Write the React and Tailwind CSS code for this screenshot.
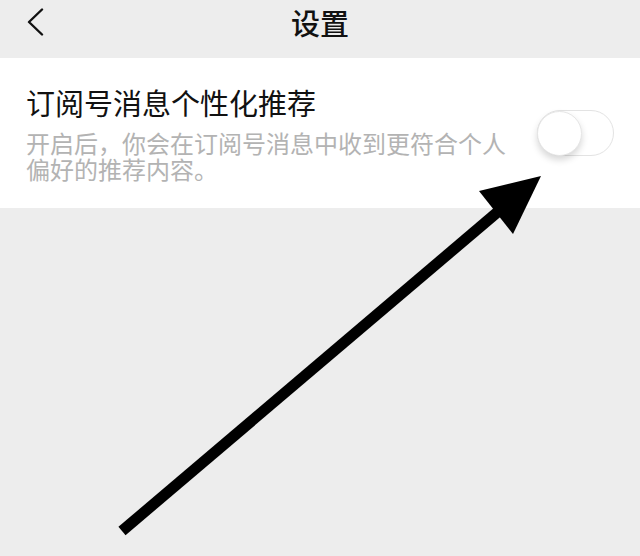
import React from "react";

const font = { fontFamily: '"Noto Sans CJK SC", "Noto Sans", sans-serif' };

export default function App() {
  return (
    <div
      className="relative w-[640px] h-[556px] bg-[#ededed] overflow-hidden"
      style={font}
    >
      <header className="grid grid-cols-[1fr_auto_1fr] items-center h-[58px] pb-[14px] px-[26px]">
        <div className="flex items-center">
          <svg width="18" height="28" viewBox="0 0 18 28" fill="none">
            <path
              d="M16 1.5 L3 14 L16 26.5"
              stroke="#111"
              strokeWidth="2.4"
              strokeLinecap="round"
              strokeLinejoin="round"
            />
          </svg>
        </div>
        <h1 className="text-[29px] leading-[36px] font-medium text-[#111]">设置</h1>
        <div />
      </header>

      <section className="flex items-center h-[150px] bg-white px-[26px]">
        <div className="flex-1 min-w-0">
          <div className="text-[29px] leading-[36px] text-[#111]">订阅号消息个性化推荐</div>
          <p className="mt-[10px] text-[24px] leading-[26.5px] text-[#b3b3b3]">
            开启后，你会在订阅号消息中收到更符合个人偏好的推荐内容。
          </p>
        </div>
        <div className="ml-[20px] flex items-center w-[77px] h-[46px] rounded-full border-[1.5px] border-[#e3e3e3] bg-white">
          <div className="w-[45px] h-[45px] -ml-[1.5px] rounded-full bg-white border border-[#e6e6e6] shadow-[0_4px_7px_rgba(0,0,0,0.16)]" />
        </div>
      </section>

      <svg
        className="absolute inset-0 pointer-events-none"
        width="640"
        height="556"
        viewBox="0 0 640 556"
      >
        <line x1="122" y1="531" x2="500" y2="210" stroke="#000" strokeWidth="11" />
        <polygon points="479,191 541,176 513,234" fill="#000" />
      </svg>
    </div>
  );
}
